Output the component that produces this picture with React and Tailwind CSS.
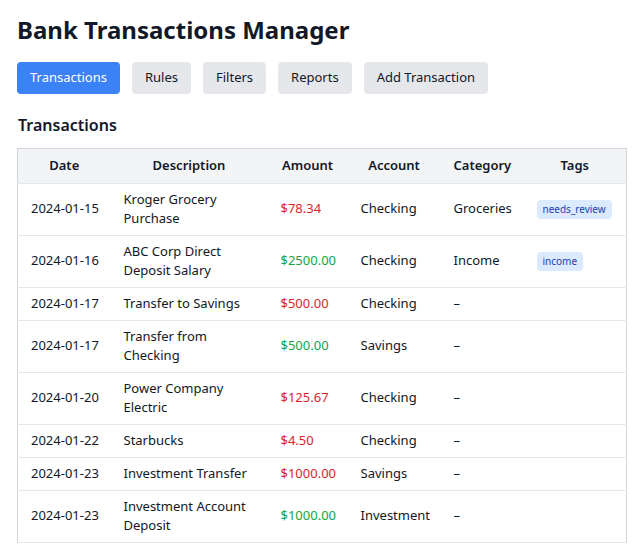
import React from 'react';

const tabs = ['Transactions', 'Rules', 'Filters', 'Reports', 'Add Transaction'];

const rows = [
  { date: '2024-01-15', desc: 'Kroger Grocery Purchase', amount: '$78.34', credit: false, account: 'Checking', category: 'Groceries', tags: ['needs_review'] },
  { date: '2024-01-16', desc: 'ABC Corp Direct Deposit Salary', amount: '$2500.00', credit: true, account: 'Checking', category: 'Income', tags: ['income'] },
  { date: '2024-01-17', desc: 'Transfer to Savings', amount: '$500.00', credit: false, account: 'Checking', category: '–', tags: [] },
  { date: '2024-01-17', desc: 'Transfer from Checking', amount: '$500.00', credit: true, account: 'Savings', category: '–', tags: [] },
  { date: '2024-01-20', desc: 'Power Company Electric', amount: '$125.67', credit: false, account: 'Checking', category: '–', tags: [] },
  { date: '2024-01-22', desc: 'Starbucks', amount: '$4.50', credit: false, account: 'Checking', category: '–', tags: [] },
  { date: '2024-01-23', desc: 'Investment Transfer', amount: '$1000.00', credit: false, account: 'Savings', category: '–', tags: [] },
  { date: '2024-01-23', desc: 'Investment Account Deposit', amount: '$1000.00', credit: true, account: 'Investment', category: '–', tags: [] },
];

const headers = ['Date', 'Description', 'Amount', 'Account', 'Category', 'Tags'];

const App = () => {
  return (
    <div className="bg-white px-[17px] pt-[14px] text-[#111827]" style={{ fontFamily: '"Noto Sans", sans-serif' }}>
      {/* Header */}
      <h1 className="text-[24px] font-bold leading-[32px]">Bank Transactions Manager</h1>

      {/* Tabs */}
      <div className="flex gap-3 mt-[16px]">
        {tabs.map((t, i) => (
          <button
            key={t}
            className={`h-[32px] px-[13px] rounded text-[13px] ${
              i === 0 ? 'bg-[#3b82f6] text-white' : 'bg-[#e5e7eb] text-[#111827]'
            }`}
          >
            {t}
          </button>
        ))}
      </div>

      {/* Transactions */}
      <h2 className="text-[16px] font-semibold leading-[24px] mt-[19px] ml-[1px]">Transactions</h2>
      <table className="table-fixed w-[609px] mt-[11px] border border-[#d1d5db] border-collapse text-[13px] leading-[19.5px]">
        <colgroup>
          <col className="w-[93px]" />
          <col className="w-[157px]" />
          <col className="w-[80px]" />
          <col className="w-[93px]" />
          <col className="w-[83px]" />
          <col className="w-[103px]" />
        </colgroup>
        <thead>
          <tr className="bg-[#f3f4f6] border-b border-[#e5e7eb]">
            {headers.map((h) => (
              <th key={h} className="px-[13px] py-[7px] font-semibold text-center whitespace-nowrap">{h}</th>
            ))}
          </tr>
        </thead>
        <tbody>
          {rows.map((r, i) => (
            <tr key={i} className="h-[33px] border-b border-[#e5e7eb]">
              <td className="pl-[13px] pr-0 py-1.5 align-middle whitespace-nowrap">{r.date}</td>
              <td className="px-[13px] py-1.5 align-middle">{r.desc}</td>
              <td className={`px-[13px] py-1.5 align-middle whitespace-nowrap ${r.credit ? 'text-[#16a34a]' : 'text-[#dc2626]'}`}>{r.amount}</td>
              <td className="px-[13px] py-1.5 align-middle whitespace-nowrap">{r.account}</td>
              <td className="px-[13px] py-1.5 align-middle whitespace-nowrap">{r.category}</td>
              <td className="px-[13px] py-1.5 align-middle">
                <div className="flex flex-wrap gap-1">
                  {r.tags.map((tag) => (
                    <span key={tag} className="px-[6px] py-[2px] rounded bg-[#dbeafe] text-[#1e40af] text-[10px] leading-[15px] whitespace-nowrap">
                      {tag}
                    </span>
                  ))}
                </div>
              </td>
            </tr>
          ))}
        </tbody>
      </table>
      <div className="h-[17px]" />
    </div>
  );
};

export default App;
